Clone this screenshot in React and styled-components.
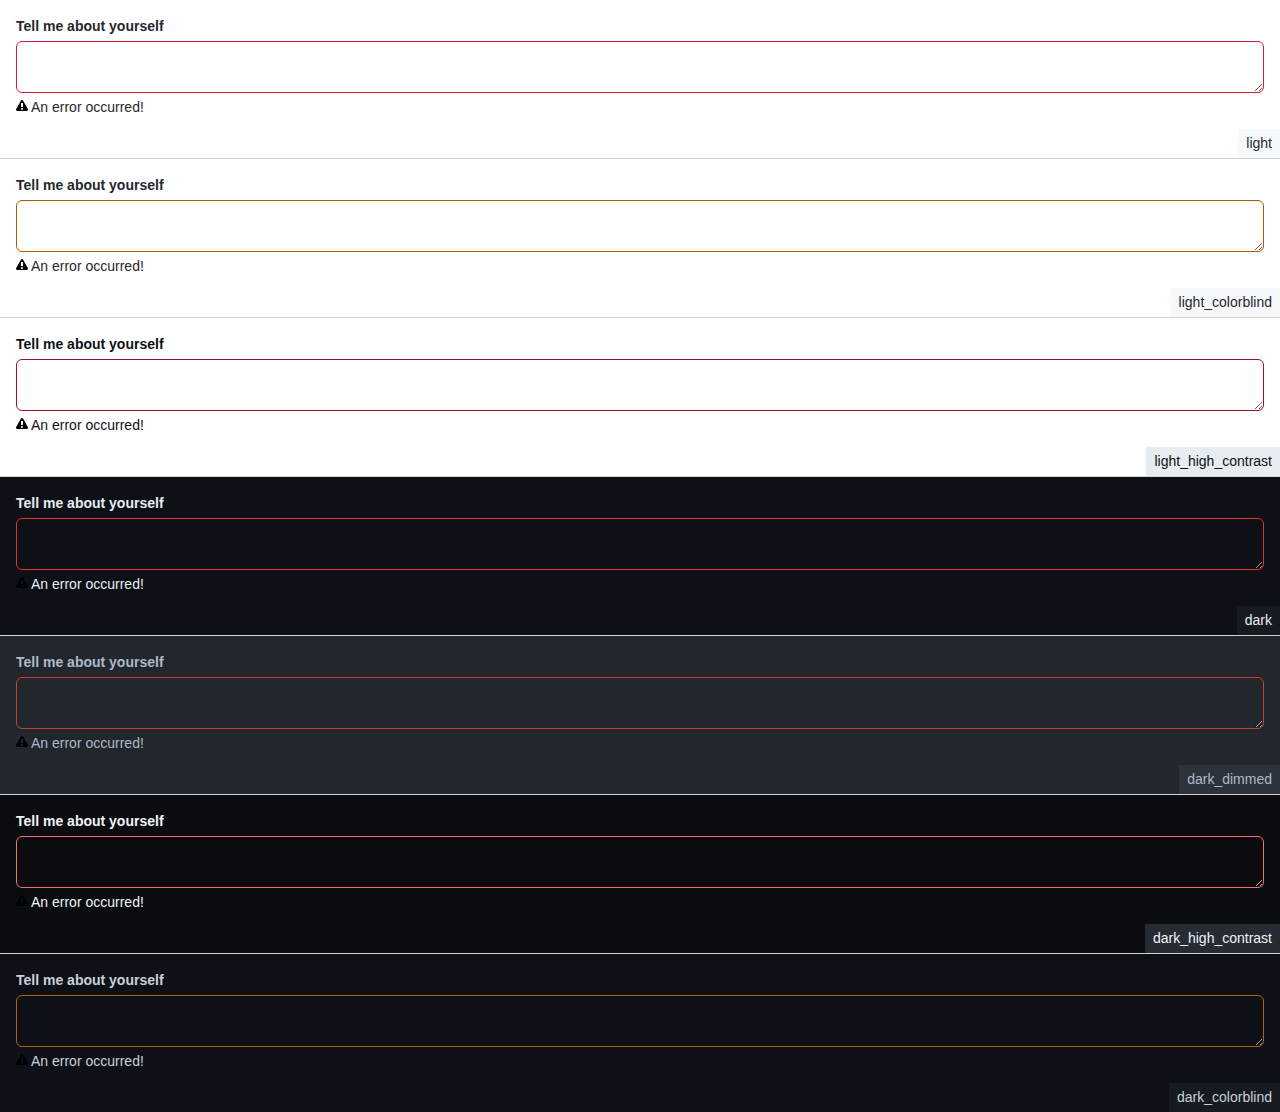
import React, { useId } from "react";
import styled, { createGlobalStyle } from "styled-components";

const GlobalStyle = createGlobalStyle`
  body {
    margin: 0;
    font-family: "Liberation Sans", Arial, sans-serif;
    font-size: 14px;
    line-height: 21px;
  }
`;

const themes = [
  { name: "light", scheme: "light", bg: "#ffffff", fg: "#24292f", error: "#cf222e", badge: "#f6f8fa" },
  { name: "light_colorblind", scheme: "light", bg: "#ffffff", fg: "#24292f", error: "#b35900", badge: "#f6f8fa" },
  { name: "light_high_contrast", scheme: "light", bg: "#ffffff", fg: "#0e1116", error: "#a0111f", badge: "#e7ecf0" },
  { name: "dark", scheme: "dark", bg: "#0d1117", fg: "#e6edf3", error: "#da3633", badge: "#161b22" },
  { name: "dark_dimmed", scheme: "dark", bg: "#22272e", fg: "#adbac7", error: "#c93c37", badge: "#2d333b" },
  { name: "dark_high_contrast", scheme: "dark", bg: "#0a0c10", fg: "#f0f3f6", error: "#ff6a69", badge: "#272b33" },
  { name: "dark_colorblind", scheme: "dark", bg: "#0d1117", fg: "#c9d1d9", error: "#b76100", badge: "#161b22" },
];

const Section = styled.section`
  display: flex;
  flex-direction: column;
  color: ${(p) => p.$theme.fg};
  background: ${(p) => p.$theme.bg};

  &:not(:last-child) {
    border-bottom: 1px solid #d3d3d3;
  }
`;

const Field = styled.div`
  display: flex;
  flex-direction: column;
  gap: 4px;
  padding: 16px 16px 11px;
`;

const Label = styled.label`
  align-self: flex-start;
  font-weight: 700;
`;

const TextArea = styled.textarea`
  display: block;
  box-sizing: border-box;
  width: 100%;
  height: 52px;
  margin: 0;
  padding: 5px 12px;
  border: 1px solid ${(p) => p.$theme.error};
  border-radius: 6px;
  outline: none;
  resize: both;
  color: inherit;
  background: ${(p) => p.$theme.bg};
  font: inherit;
`;

const ErrorMessage = styled.div`
  display: flex;
  align-items: baseline;
  gap: 3px;
`;

const Icon = styled.svg`
  flex: none;
  width: 12px;
  height: 12px;
  fill: #000000;
`;

const ThemeName = styled.div`
  align-self: flex-end;
  padding: 4px 8px;
  background: ${(p) => p.$theme.badge};
`;

function AlertIcon() {
  return (
    <Icon viewBox="0 0 12 12" aria-hidden="true">
      <path d="M4.855.708c.5-.896 1.79-.896 2.29 0l4.675 8.351a1.312 1.312 0 0 1-1.146 1.954H1.33A1.313 1.313 0 0 1 .183 9.058ZM7 7V3H5v4Zm-1 3a1 1 0 1 0 0-2 1 1 0 0 0 0 2Z" />
    </Icon>
  );
}

function ThemedField({ theme }) {
  const id = useId();
  return (
    <Section $theme={theme}>
      <Field>
        <Label htmlFor={id}>Tell me about yourself</Label>
        <TextArea id={id} $theme={theme} aria-invalid="true" aria-describedby={`${id}-error`} />
        <ErrorMessage id={`${id}-error`}>
          <AlertIcon />
          <span>An error occurred!</span>
        </ErrorMessage>
      </Field>
      <ThemeName $theme={theme}>{theme.name}</ThemeName>
    </Section>
  );
}

export default function App() {
  return (
    <>
      <GlobalStyle />
      <main>
        {themes.map((theme) => (
          <ThemedField key={theme.name} theme={theme} />
        ))}
      </main>
    </>
  );
}
